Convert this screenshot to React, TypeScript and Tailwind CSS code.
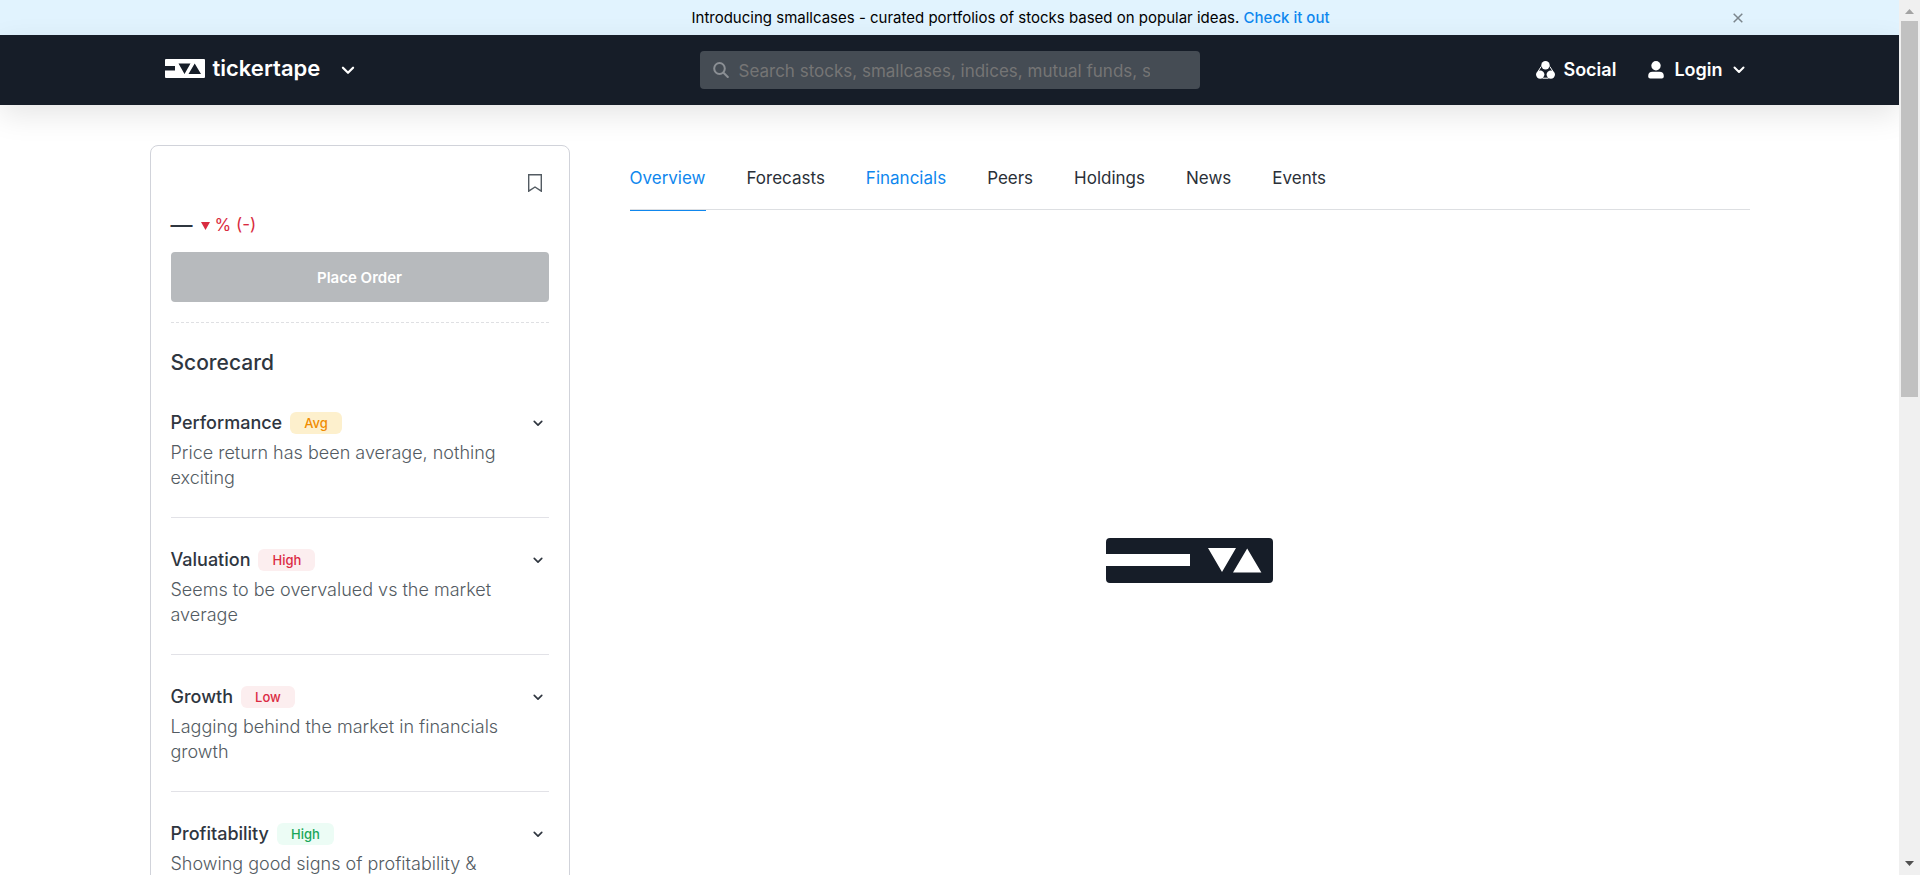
import React from "react";

type Tone = "amber" | "red" | "green";

const tones: Record<Tone, string> = {
  amber: "bg-[#fdf0cd] text-[#f08c00]",
  red: "bg-[#fceeef] text-[#db2a43]",
  green: "bg-[#ecfcf5] text-[#19a658]",
};

const scores: { name: string; tag: string; tone: Tone; text: string }[] = [
  { name: "Performance", tag: "Avg", tone: "amber", text: "Price return has been average, nothing exciting" },
  { name: "Valuation", tag: "High", tone: "red", text: "Seems to be overvalued vs the market average" },
  { name: "Growth", tag: "Low", tone: "red", text: "Lagging behind the market in financials growth" },
  { name: "Profitability", tag: "High", tone: "green", text: "Showing good signs of profitability & efficiency" },
];

const tabs = ["Overview", "Forecasts", "Financials", "Peers", "Holdings", "News", "Events"];

function Chevron({ className }: { className: string }) {
  return (
    <svg viewBox="0 0 12 8" className={className} fill="none" stroke="currentColor" strokeWidth="2" strokeLinecap="round" strokeLinejoin="round" aria-hidden="true">
      <path d="M1.5 1.5 6 6l4.5-4.5" />
    </svg>
  );
}

function LogoMark() {
  return (
    <svg viewBox="0 0 40 19" className="h-[19px] w-10" aria-hidden="true">
      <path
        fill="#fff"
        fillRule="evenodd"
        d="M1 0h38a1 1 0 0 1 1 1v17a1 1 0 0 1-1 1H1a1 1 0 0 1-1-1v-6.500h10v-4.500H0V1a1 1 0 0 1 1-1ZM13.500 4.500h12l-6 10.500ZM23.500 15l6.200-10.500L36 15Z"
      />
    </svg>
  );
}

function Loader() {
  return (
    <svg viewBox="0 0 167 45" className="h-[45px] w-[167px]" role="img" aria-label="Loading">
      <path
        fill="#161d28"
        fillRule="evenodd"
        d="M4 0h159a4 4 0 0 1 4 4v37a4 4 0 0 1-4 4H4a4 4 0 0 1-4-4V28h84V16H0V4a4 4 0 0 1 4-4ZM102 10h28l-14 24ZM127 34.500l14.200-24 14.200 24Z"
      />
    </svg>
  );
}

function Banner() {
  return (
    <div className="bg-[#e1f3fe]">
      <div className="mx-auto flex h-[35px] max-w-[1600px] items-center">
        <p className="flex-1 pl-[140px] text-center text-[15px] leading-5 text-black">
          Introducing smallcases - curated portfolios of stocks based on popular ideas.{" "}
          <a href="#smallcases" className="font-medium text-[#0f87ee]">Check it out</a>
        </p>
        <button type="button" aria-label="Close announcement" className="mr-1.5 p-px text-[#7b858c]">
          <svg viewBox="0 0 10 10" className="h-2.5 w-2.5" fill="none" stroke="currentColor" strokeWidth="1.500" aria-hidden="true">
            <path d="m.7.7 8.600 8.600M9.300.7.7 9.300" />
          </svg>
        </button>
      </div>
    </div>
  );
}

function Header() {
  return (
    <header className="bg-[#161d28] text-white shadow-[0_10px_30px_rgba(0,0,0,0.1)]">
      <div className="mx-auto grid h-[70px] max-w-[1600px] grid-cols-[1fr_500px_1fr] items-center">
        <div className="flex items-center pl-[15px]">
          <a href="#home" className="flex items-center gap-2 pb-1">
            <LogoMark />
            <span className="text-[22px] leading-7 font-semibold">tickertape</span>
          </a>
          <button type="button" aria-label="Products" className="ml-[21px]">
            <Chevron className="h-[9px] w-3.5" />
          </button>
        </div>
        <label className="flex h-[38px] items-center gap-2.5 rounded bg-[#454c54] pr-[50px] pl-[13px]">
          <svg viewBox="0 0 16 16" className="h-4 w-4 shrink-0 text-[#8b8f94]" fill="none" stroke="currentColor" strokeWidth="2" strokeLinecap="round" aria-hidden="true">
            <ellipse cx="6.500" cy="6.500" rx="5.300" ry="5.500" />
            <path d="m10.800 11 4 4" />
          </svg>
          <input
            type="text"
            aria-label="Search"
            placeholder="Search stocks, smallcases, indices, mutual funds, screeners"
            className="min-w-0 flex-1 bg-transparent pt-0.5 text-[17px] leading-6 outline-none placeholder:text-[#757575]"
          />
        </label>
        <nav className="flex items-center justify-end gap-8 pr-[5px] text-lg leading-6 font-semibold">
          <a href="#social" className="flex items-center gap-2">
            <svg viewBox="0 0 19 18" className="h-[18px] w-[19px]" aria-hidden="true">
              <g fill="currentColor">
                <circle cx="9.500" cy="4.300" r="4.200" />
                <circle cx="4.200" cy="13.600" r="4.200" />
                <circle cx="14.800" cy="13.600" r="4.200" />
              </g>
              <path d="M5.200 5.500 2 10.500M13.800 5.500l3.200 5M6.500 17.200h6" fill="none" stroke="currentColor" strokeWidth="1" />
            </svg>
            Social
          </a>
          <button type="button" className="flex items-center gap-2.5">
            <svg viewBox="0 0 16 18" className="h-[18px] w-4" fill="currentColor" aria-hidden="true">
              <circle cx="8" cy="4.800" r="4.700" />
              <path d="M4.500 10.800h7A4.300 4.300 0 0 1 15.800 15v.5a2 2 0 0 1-2 2H2.200a2 2 0 0 1-2-2V15a4.300 4.300 0 0 1 4.300-4.200Z" />
            </svg>
            Login
            <Chevron className="h-2 w-3" />
          </button>
        </nav>
      </div>
    </header>
  );
}

function StockCard() {
  return (
    <aside className="w-[420px] shrink-0 rounded-lg border border-[#d1d3da] px-5 pt-7 pb-5">
      <div className="flex justify-end pr-[7px]">
        <button type="button" aria-label="Add to watchlist" className="text-[#535b62]">
          <svg viewBox="0 0 14 18" className="h-[18px] w-3.5" fill="none" stroke="currentColor" strokeWidth="1.400" aria-hidden="true">
            <path d="M.7.7h12.600v16.500L7 13 .7 17.200Z" />
          </svg>
        </button>
      </div>
      <div className="mt-5 flex h-6 items-center pt-0.5 text-[#d92b40]">
        <span className="text-[22px] leading-6 font-medium text-[#2f363f]">—</span>
        <svg viewBox="0 0 9 8" className="mt-0.5 ml-2 h-2 w-[9px]" fill="currentColor" aria-hidden="true">
          <path d="M0 0h9L4.500 8Z" />
        </svg>
        <span className="ml-[5px] text-[17px] leading-6">% (-)</span>
      </div>
      <button type="button" className="mt-4 h-[50px] w-full rounded bg-[#b7babd] pt-0.5 text-[15px] font-semibold text-white">
        Place Order
      </button>
      <div className="mt-5 border-t border-dashed border-[#dfe0e3]" />
      <h2 className="mt-[26px] text-[21px] leading-7 font-medium text-[#2f363f]">Scorecard</h2>
      <ul className="mt-1">
        {scores.map((s) => (
          <li key={s.name} className="border-b border-[#e2e2e7] pt-[31px] pb-[27px]">
            <button type="button" className="flex w-full items-center text-left">
              <span className="text-lg leading-[22px] font-medium text-[#2f363f]">{s.name}</span>
              <span className={`ml-2 rounded-md px-3.5 text-[13px] leading-[22px] font-medium ${tones[s.tone]}`}>{s.tag}</span>
              <Chevron className="mr-1.5 ml-auto h-[7px] w-[10px] text-[#2f363f]" />
            </button>
            <p className="mt-1.5 pr-10 text-lg leading-[25px] font-light text-[#535b62]">{s.text}</p>
          </li>
        ))}
      </ul>
    </aside>
  );
}

function Main() {
  return (
    <main className="flex min-w-0 flex-1 flex-col">
      <nav className="flex gap-[41px] border-b border-[#dddfe2] pt-[21px] text-[17px] leading-6 text-[#2a3038]">
        {tabs.map((t) => (
          <a
            key={t}
            href={`#${t.toLowerCase()}`}
            className={
              t === "Overview"
                ? "-mb-0.5 border-b border-[#0f87ee] pb-[19px] text-[#0f87ee]"
                : t === "Financials"
                  ? "pb-[19px] text-[#0f87ee]"
                  : "pb-[19px]"
            }
          >
            {t}
          </a>
        ))}
      </nav>
      <div className="flex justify-center pt-[328px]">
        <Loader />
      </div>
    </main>
  );
}

function ScrollTrack() {
  return (
    <div className="flex w-[21px] shrink-0 flex-col items-center bg-[#f0f0f0]" aria-hidden="true">
      <svg viewBox="0 0 9 5" className="mt-[9px] h-[5px] w-[9px] fill-[#a3a3a3]">
        <path d="M0 5h9L4.500 0Z" />
      </svg>
      <div className="mt-[7px] h-[43%] w-[17px] bg-[#c1c1c1]" />
      <svg viewBox="0 0 9 5" className="mt-auto mb-[9px] h-[5px] w-[9px] fill-[#505050]">
        <path d="M0 0h9L4.500 5Z" />
      </svg>
    </div>
  );
}

export default function App() {
  return (
    <div className="flex h-screen bg-white font-['Inter','Liberation_Sans',sans-serif]">
      <div className="min-w-0 flex-1 overflow-hidden">
        <Banner />
        <Header />
        <div className="mx-auto flex max-w-[1600px] items-start gap-[60px] pt-10">
          <StockCard />
          <Main />
        </div>
      </div>
      <ScrollTrack />
    </div>
  );
}
